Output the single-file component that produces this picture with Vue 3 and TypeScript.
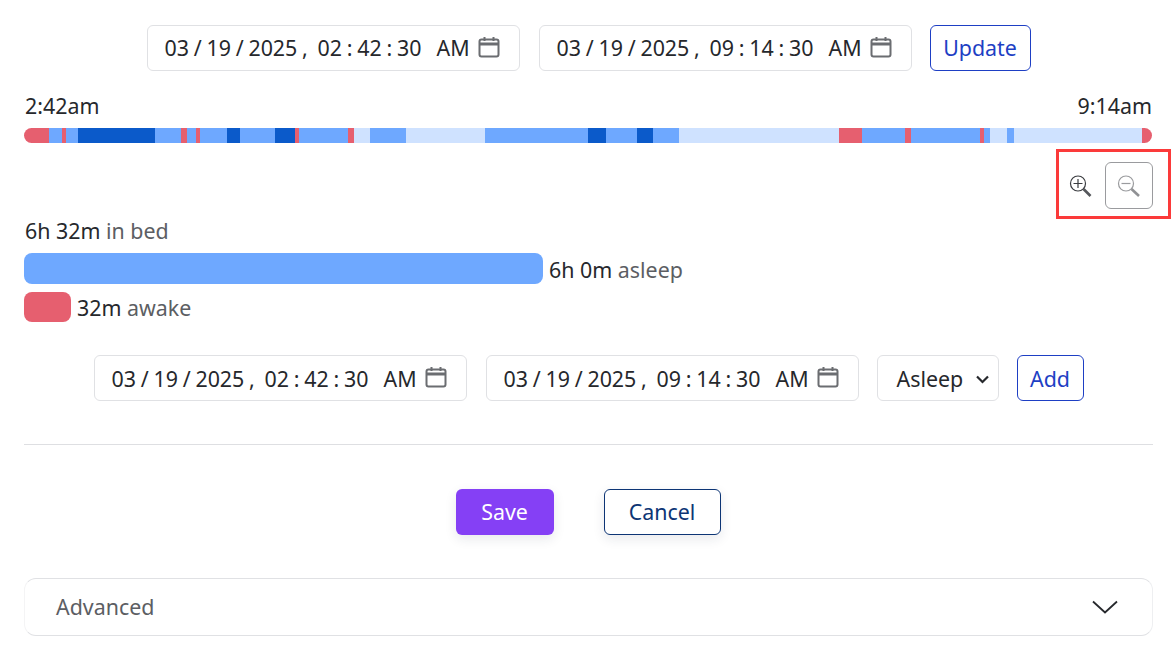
<script setup lang="ts">
type Seg = { end: number; kind: string };
const START = 24;
const raw: Seg[] = [
  { end: 49, kind: 'red' }, { end: 62, kind: 'mid' }, { end: 66, kind: 'red' }, { end: 78, kind: 'mid' },
  { end: 155, kind: 'dark' }, { end: 181, kind: 'mid' }, { end: 187, kind: 'red' }, { end: 196, kind: 'mid' },
  { end: 200, kind: 'red' }, { end: 227, kind: 'mid' }, { end: 240, kind: 'dark' }, { end: 275, kind: 'mid' },
  { end: 295, kind: 'dark' }, { end: 299, kind: 'red' }, { end: 348, kind: 'mid' }, { end: 354, kind: 'red' },
  { end: 370, kind: 'pale' }, { end: 406, kind: 'mid' }, { end: 485, kind: 'pale' }, { end: 588, kind: 'mid' },
  { end: 606, kind: 'dark' }, { end: 637, kind: 'mid' }, { end: 653, kind: 'dark' }, { end: 679, kind: 'mid' },
  { end: 839, kind: 'pale' }, { end: 862, kind: 'red' }, { end: 905, kind: 'mid' }, { end: 911, kind: 'red' },
  { end: 980, kind: 'mid' }, { end: 984, kind: 'red' }, { end: 990, kind: 'mid' }, { end: 1007, kind: 'pale' },
  { end: 1014, kind: 'mid' }, { end: 1142, kind: 'pale' }, { end: 1152, kind: 'red' },
];
const segments = raw.map((s, i) => ({ kind: s.kind, width: s.end - (i ? raw[i - 1].end : START) }));
const first = { date: '03 / 19 / 2025 ,', time: '02 : 42 : 30' };
const second = { date: '03 / 19 / 2025 ,', time: '09 : 14 : 30' };
</script>

<template>
  <div class="page">
    <div class="row top-row">
      <div v-for="d in [first, second]" :key="d.time" class="date">
        <span class="d-date">{{ d.date }}</span><span class="d-time">{{ d.time }}</span><span class="d-ampm">AM</span>
        <svg class="cal" viewBox="0 0 22 22" width="22" height="22" fill="none" stroke="#6b6d71" stroke-width="2">
          <rect x="1.5" y="3.5" width="19" height="17" rx="2" />
          <path d="M1.5 8h19" stroke-width="3" />
          <path d="M6.5 1v4M15.5 1v4" />
        </svg>
      </div>
      <button class="btn-outline update">Update</button>
    </div>

    <div class="times"><span>2:42am</span><span>9:14am</span></div>
    <div class="timeline">
      <div v-for="(s, i) in segments" :key="i" :class="['seg', s.kind]" :style="{ width: s.width + 'px' }"></div>
    </div>

    <div class="zoom-row">
      <svg class="zoom-icon" viewBox="0 0 24 24" width="24" height="24" fill="none" stroke="#3a3c40">
        <circle cx="10" cy="9.5" r="7.5" stroke-width="1.2" />
        <path d="M10 5v9M5.5 9.5h9" stroke-width="1.2" />
        <path d="M15.5 15l7 7" stroke="#55575b" stroke-width="2.6" />
      </svg>
      <div class="zoom-btn">
        <svg viewBox="0 0 24 24" width="24" height="24" fill="none" stroke="#9a9b9e">
          <circle cx="9" cy="9.5" r="7.5" stroke-width="1.2" />
          <path d="M4.5 9.5h9" stroke-width="1.2" />
          <path d="M14.5 15l7.5 7" stroke="#909194" stroke-width="2.6" />
        </svg>
      </div>
    </div>

    <div class="stat in-bed">6h 32m <span class="muted">in bed</span></div>
    <div class="bar-row asleep-row">
      <div class="bar asleep"></div>
      <div class="stat low">6h 0m <span class="muted">asleep</span></div>
    </div>
    <div class="bar-row awake-row">
      <div class="bar awake"></div>
      <div class="stat low">32m <span class="muted">awake</span></div>
    </div>

    <div class="row add-row">
      <div v-for="d in [first, second]" :key="d.time" class="date">
        <span class="d-date">{{ d.date }}</span><span class="d-time">{{ d.time }}</span><span class="d-ampm">AM</span>
        <svg class="cal" viewBox="0 0 22 22" width="22" height="22" fill="none" stroke="#6b6d71" stroke-width="2">
          <rect x="1.5" y="3.5" width="19" height="17" rx="2" />
          <path d="M1.5 8h19" stroke-width="3" />
          <path d="M6.5 1v4M15.5 1v4" />
        </svg>
      </div>
      <div class="select">
        <span>Asleep</span>
        <svg viewBox="0 0 13 9" width="13" height="9" fill="none" stroke="#26282c" stroke-width="2.2">
          <path d="M1 1.5l5.5 5.5 5.5-5.5" />
        </svg>
      </div>
      <button class="btn-outline add">Add</button>
    </div>

    <div class="divider"></div>

    <div class="actions">
      <button class="save">Save</button>
      <button class="cancel">Cancel</button>
    </div>

    <div class="advanced">
      <span>Advanced</span>
      <svg viewBox="0 0 26 14" width="26" height="14" fill="none" stroke="#26282c" stroke-width="1.8">
        <path d="M1 1.5l12 11 12-11" />
      </svg>
    </div>

    <div class="highlight"></div>
  </div>
</template>

<style>
html, body { margin: 0; background: #fff; }
</style>

<style scoped>
.page {
  position: relative;
  box-sizing: border-box;
  width: 1176px;
  height: 660px;
  overflow: hidden;
  padding: 25px 23px 0 24px;
  background: #fff;
  color: #26282c;
  font-family: "Noto Sans", sans-serif;
  font-size: 21.4px;
  font-weight: 375;
  line-height: 28px;
}
.row { display: flex; justify-content: center; }
.top-row { gap: 19px; }
.date {
  box-sizing: border-box;
  display: flex;
  align-items: center;
  width: 373px;
  height: 46px;
  padding-left: 17px;
  border: 1px solid #e0e1e4;
  border-radius: 6px;
  white-space: pre;
  word-spacing: -0.8px;
}
.d-date { width: 153px; }
.d-time { width: 119px; }
.d-ampm { width: 41px; }
.cal { margin-top: -3px; }
.btn-outline {
  box-sizing: border-box;
  height: 46px;
  padding: 0;
  border: 1px solid #1e3fc4;
  border-radius: 6px;
  background: #fff;
  color: #1e3fc4;
  font: inherit;
}
.update { width: 101px; margin-left: -1px; }
.times {
  display: flex;
  justify-content: space-between;
  margin-top: 21px;
  padding: 0 1px;
}
.timeline {
  display: flex;
  width: 1128px;
  height: 15px;
  margin-top: 8px;
  border-radius: 8px;
  overflow: hidden;
}
.seg { height: 100%; }
.red { background: #e65f6f; }
.mid { background: #6ea8ff; }
.dark { background: #0b5aca; }
.pale { background: #cfe2ff; }
.zoom-row {
  display: flex;
  justify-content: flex-end;
  align-items: center;
  gap: 13px;
  margin-top: 19px;
}
.zoom-icon { display: block; }
.zoom-btn {
  box-sizing: border-box;
  display: flex;
  align-items: center;
  justify-content: center;
  width: 48px;
  height: 47px;
  border: 1px solid #9a9b9e;
  border-radius: 6px;
}
.muted { color: #5c5e63; }
.in-bed { margin-top: 8px; padding-left: 1px; }
.bar-row { display: flex; align-items: center; gap: 6px; }
.bar { border-radius: 8px; }
.low { padding-top: 2px; }
.asleep-row { margin-top: 8px; height: 31px; }
.asleep { width: 519px; height: 31px; background: #6ea8ff; }
.awake-row { margin-top: 8px; height: 30px; }
.awake { width: 47px; height: 30px; background: #e65f6f; }
.add-row { gap: 19px; margin-top: 33px; align-items: center; }
.add-row .date { padding-top: 2px; }
.add-row .cal { margin-top: -4px; }
.select {
  box-sizing: border-box;
  display: flex;
  align-items: center;
  justify-content: space-between;
  width: 122px;
  height: 46px;
  margin-left: -1px;
  padding: 2px 9px 0 19px;
  border: 1px solid #e0e1e4;
  border-radius: 6px;
}
.add { width: 67px; margin-left: -1px; padding-top: 2px; }
.divider {
  height: 1px;
  margin-top: 43px;
  background: #dedfe2;
}
.actions {
  display: flex;
  justify-content: center;
  gap: 50px;
  margin-top: 44px;
  padding-right: 1px;
}
.save, .cancel {
  box-sizing: border-box;
  height: 46px;
  padding: 0;
  border-radius: 6px;
  font: inherit;
  box-shadow: 0 4px 12px rgba(30, 40, 70, 0.1);
}
.save {
  width: 98px;
  border: 0;
  background: #8540f5;
  color: #fff;
}
.cancel {
  width: 117px;
  border: 1px solid #0d3575;
  background: #fff;
  color: #0d3575;
}
.advanced {
  box-sizing: border-box;
  display: flex;
  align-items: center;
  justify-content: space-between;
  height: 58px;
  margin-top: 43px;
  padding: 0 34px 0 31px;
  border: 1px solid #e0e1e4;
  border-left-color: #f4f4f5;
  border-right-color: #eeeff1;
  border-radius: 12px;
  color: #5c5e63;
}
.highlight {
  position: absolute;
  left: 1056px;
  top: 149px;
  width: 109px;
  height: 64px;
  border: 3px solid #fb3a3a;
}
</style>
